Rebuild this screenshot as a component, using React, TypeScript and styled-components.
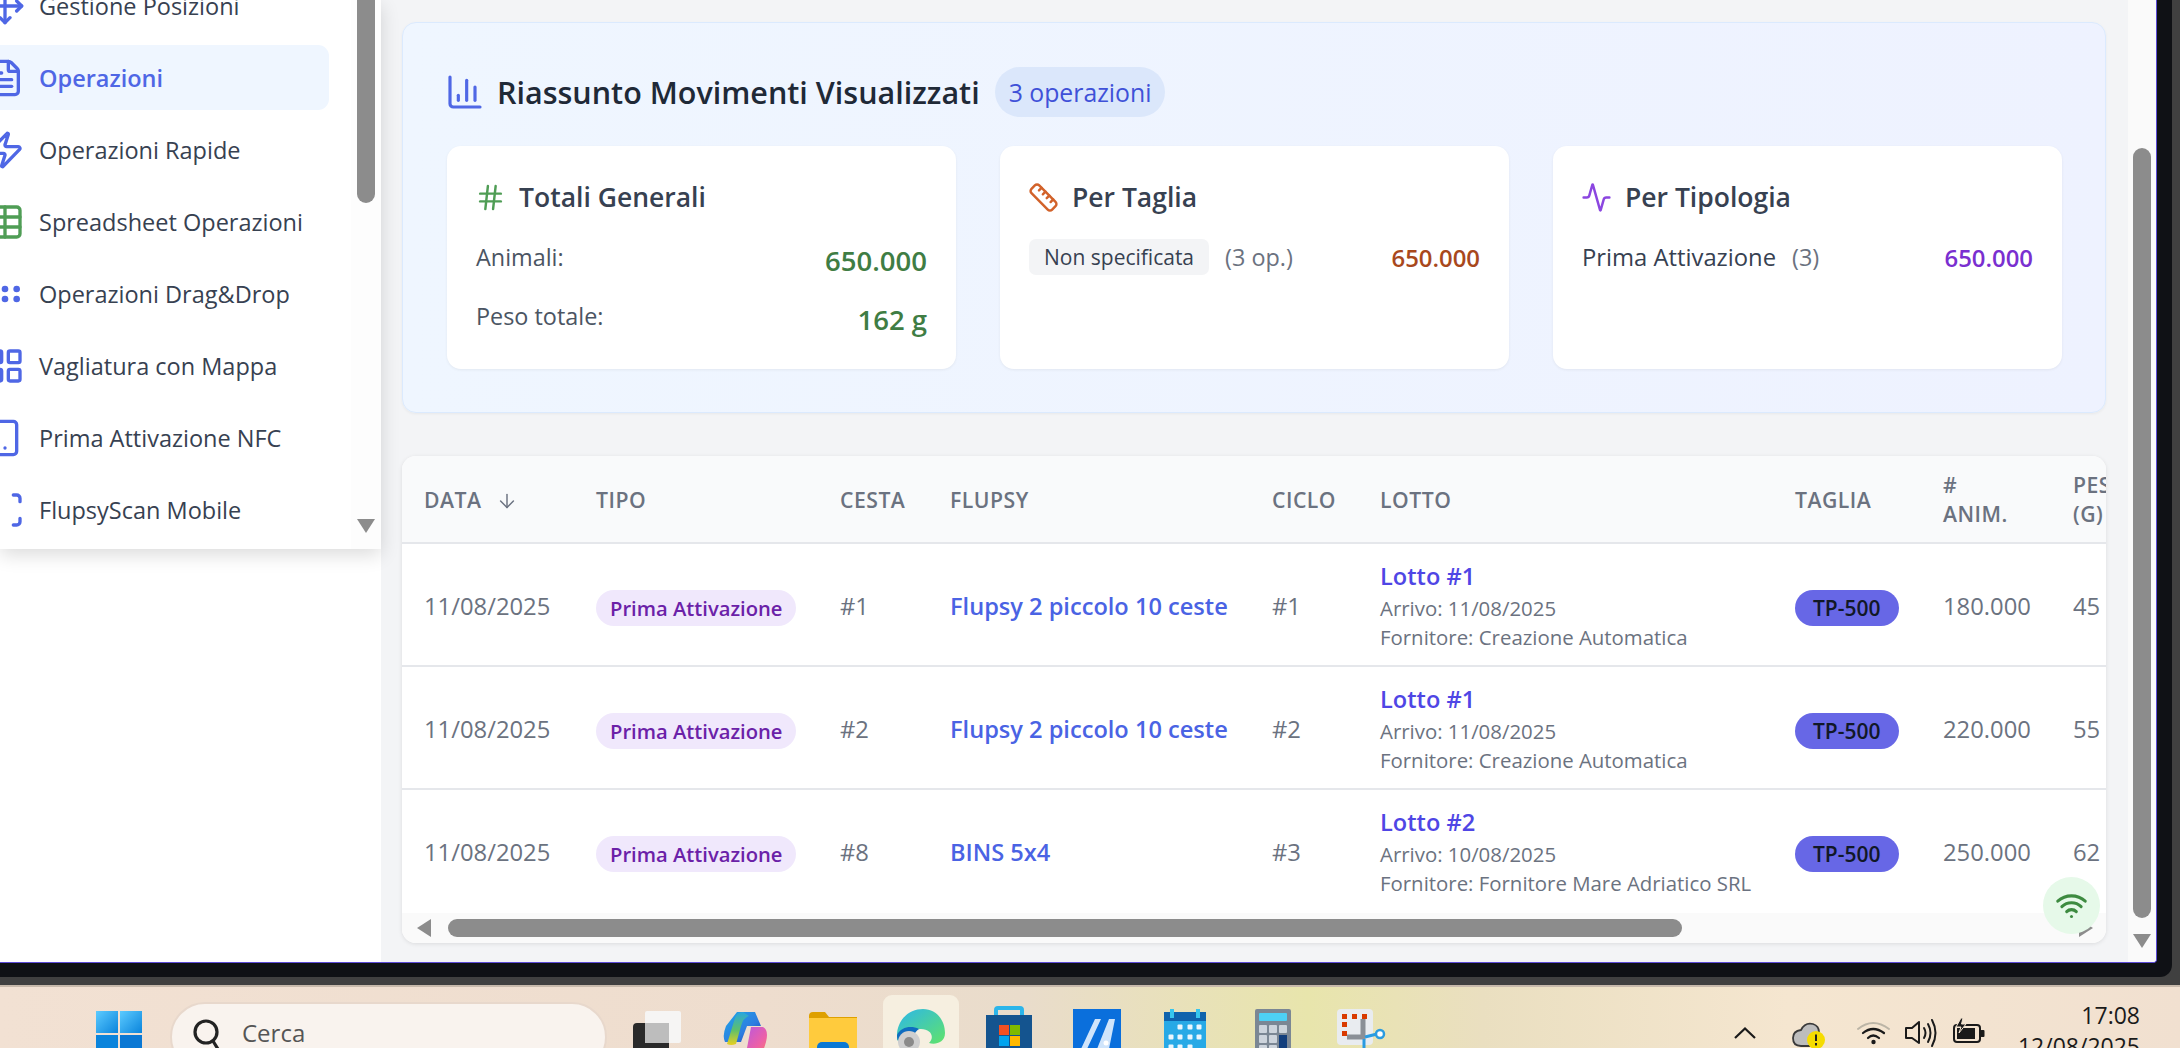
import React from "react";
import styled, { createGlobalStyle } from "styled-components";
import {
  Move, FileText, Zap, Table, GripHorizontal, LayoutGrid, Smartphone, Scan,
  ChartColumn, Hash, Ruler, Activity, ArrowDown, Wifi,
} from "lucide-react";

const FONT = `"Open Sans", "Noto Sans", "Liberation Sans", sans-serif`;

const Global = createGlobalStyle`
  html, body { margin: 0; padding: 0; width: 2180px; height: 1048px; overflow: hidden; background: #404040; }
  * { box-sizing: border-box; }
  body { font-family: ${FONT}; }
`;

const Screen = styled.div`
  width: 2180px; height: 1048px; display: flex; flex-direction: column; overflow: hidden;
`;
const GrayFrame = styled.div`
  height: 985px; flex: none; background: #404040; padding-right: 8px; padding-bottom: 8px; display: flex;
`;
const BlackFrame = styled.div`
  flex: 1; background: #0f1115; padding-right: 15px; padding-bottom: 14px; display: flex;
  border-bottom-right-radius: 12px; min-width: 0;
`;
const Win = styled.div`
  flex: 1; min-width: 0; display: flex; background: #fff; overflow: hidden;
  border-right: 1px solid #5b4bd6; border-bottom: 1px solid #5b4bd6; border-bottom-right-radius: 4px;
`;

/* Sidebar */
const SideColumn = styled.aside`
  width: 381px; flex: none; background: #fff; position: relative; z-index: 2;
`;
const SidePanel = styled.div`
  height: 549px; background: #fff; display: flex; box-shadow: 0 6px 18px rgba(0,0,0,.14);
`;
const NavClip = styled.div`
  flex: 1; min-width: 0; overflow: hidden;
`;
const Nav = styled.nav`
  margin: -27px 22px 0 -30px; display: flex; flex-direction: column; gap: 7px;
`;
const NavItem = styled.div<{ $active?: boolean; $icon?: string }>`
  height: 65px; flex: none; border-radius: 11px; display: flex; align-items: center; gap: 14px; padding-left: 15px;
  background: ${(p) => (p.$active ? "#eff6ff" : "transparent")};
  color: ${(p) => (p.$active ? "#4f67e5" : "#374151")};
  font-weight: ${(p) => (p.$active ? 600 : 400)};
  font-size: 23.5px; white-space: nowrap;
  svg { width: 40px; height: 40px; flex: none; color: ${(p) => p.$icon || "#4f67e5"}; stroke-width: 2; }
`;
const SideTrack = styled.div`
  width: 30px; flex: none; background: #fdfdfd; display: flex; flex-direction: column; align-items: center; padding-bottom: 16px;
`;
const SideThumb = styled.div`
  width: 18px; height: 203px; flex: none; background: #8c8c8c; border-radius: 0 0 9px 9px;
`;
const Spring = styled.div`flex: 1;`;
const ArrowDownTri = styled.div`
  width: 0; height: 0; border-left: 9px solid transparent; border-right: 9px solid transparent;
  border-top: 14px solid #8c8c8c; flex: none;
`;

/* Main */
const Main = styled.main`
  flex: 1; min-width: 0; background: #f3f4f6; padding: 22px 22px 0 21px; display: flex; flex-direction: column; gap: 43px;
`;
const PageTrack = styled.div`
  width: 28px; flex: none; background: #fafafa; display: flex; flex-direction: column; align-items: center; padding-top: 148px; padding-bottom: 14px;
`;
const PageThumb = styled.div`
  width: 18px; height: 770px; flex: none; background: #8c8c8c; border-radius: 9px;
`;

const SummaryPanel = styled.section`
  height: 391px; flex: none; border: 1px solid #dbeafe; border-radius: 14px; padding: 44px 43px 0 44px;
  background: linear-gradient(90deg, #eff6ff, #eef2ff); box-shadow: 0 1px 3px rgba(0,0,0,.05);
`;
const SummaryHead = styled.div`
  height: 50px; display: flex; align-items: center;
  svg { width: 40px; height: 40px; color: #4f67e5; flex: none; margin-left: -2px; stroke-width: 1.9; }
`;
const SummaryTitle = styled.h2`
  margin: 0 15px 0 12px; font-size: 30.5px; font-weight: 600; color: #1f2937; white-space: nowrap;
`;
const CountBadge = styled.span`
  height: 50px; padding: 0 14px; border-radius: 25px; background: #dbe7fb; color: #3f51d8;
  font-size: 24.8px; font-weight: 500; display: flex; align-items: center; white-space: nowrap;
`;
const Cards = styled.div`
  margin-top: 29px; display: grid; grid-template-columns: repeat(3, 1fr); gap: 44px;
`;
const Card = styled.div`
  height: 223px; background: #fff; border-radius: 14px; padding: 29px 29px 0; box-shadow: 0 1px 3px rgba(0,0,0,.06);
`;
const CardHead = styled.div<{ $color: string }>`
  height: 44px; display: flex; align-items: center; gap: 13px; margin-bottom: 20px;
  svg { width: 31px; height: 31px; flex: none; color: ${(p) => p.$color}; margin-left: -1px; stroke-width: 1.9; }
`;
const CardTitle = styled.h3`
  margin: 0; font-size: 26.5px; font-weight: 600; color: #374151; white-space: nowrap;
`;
const StatRow = styled.div`
  display: flex; justify-content: space-between; align-items: flex-start; height: 44px; margin-bottom: 15px;
`;
const StatLabel = styled.span`
  font-size: 23.4px; line-height: 36px; color: #4b5563;
`;
const StatValue = styled.span`
  font-size: 27.5px; line-height: 44px; font-weight: 600; color: #3f7d44;
`;
const BreakRow = styled.div`
  display: flex; align-items: center; height: 36px;
`;
const SizeChip = styled.span`
  height: 36px; padding: 0 15px; background: #f3f4f6; border-radius: 7px; color: #374151;
  font-size: 21px; font-weight: 500; display: flex; align-items: center; white-space: nowrap;
`;
const MutedCount = styled.span`
  margin-left: 16px; font-size: 23.4px; color: #6b7280; white-space: nowrap;
`;
const TypeName = styled.span`
  font-size: 23.8px; color: #374151; white-space: nowrap;
`;
const BreakValue = styled.span<{ $color: string }>`
  margin-left: auto; font-size: 23.9px; font-weight: 600; color: ${(p) => p.$color};
`;

/* Table */
const TableCard = styled.section`
  height: 487px; flex: none; position: relative; background: #fff; border-radius: 14px; overflow: hidden;
  box-shadow: 0 1px 4px rgba(0,0,0,.1); display: flex; flex-direction: column;
`;
const TableClip = styled.div`
  flex: 1; min-height: 0; overflow: hidden;
`;
const DataTable = styled.table`
  border-collapse: collapse; table-layout: fixed; width: 1788px;
`;
const Th = styled.th`
  height: 87px; padding: 0 0 0 22px; background: #f9fafb; border-bottom: 2px solid #e5e7eb; text-align: left;
  color: #6b7280; font-size: 21.2px; font-weight: 600; line-height: 29px; letter-spacing: 0.5px; text-transform: uppercase; white-space: nowrap;
  svg { width: 22px; height: 22px; margin-left: 14px; vertical-align: -4px; stroke-width: 1.6; }
`;
const Tr = styled.tr`
  &:not(:last-child) td { border-bottom: 2px solid #e5e7eb; }
`;
const Td = styled.td`
  height: 123px; padding: 2px 0 0 22px; font-size: 23.8px; color: #6b7280; white-space: nowrap; vertical-align: middle;
`;
const TypePill = styled.span`
  display: inline-flex; align-items: center; height: 36px; padding: 0 14px; border-radius: 18px; background: #f0e8fc; color: #6b21a8;
  font-size: 20.2px; font-weight: 600; vertical-align: middle; margin-top: 4px;
`;
const FlupsyLink = styled.span`
  color: #4a63e4; font-weight: 600; font-size: 23.6px;
`;
const LotName = styled.div`
  color: #4f46e5; font-size: 23.6px; font-weight: 600; line-height: 33px; margin-bottom: 1px;
`;
const LotMeta = styled.div`
  color: #6b7280; font-size: 20.4px; line-height: 29px;
`;
const SizePill = styled.span`
  display: inline-flex; align-items: center; height: 36px; padding: 0 18px; border-radius: 18px; background: #6767e6; color: #111827;
  font-size: 21px; font-weight: 600; vertical-align: middle; margin-top: 4px;
`;
const HBar = styled.div`
  height: 30px; flex: none; background: #fafafa; display: flex; align-items: center; padding: 0 13px 0 15px;
`;
const HLeft = styled.div`
  width: 0; height: 0; border-top: 9px solid transparent; border-bottom: 9px solid transparent; border-right: 14px solid #8c8c8c; flex: none;
`;
const HThumb = styled.div`
  width: 1234px; height: 18px; margin-left: 17px; background: #8c8c8c; border-radius: 9px; flex: none;
`;
const HRight = styled.div`
  width: 0; height: 0; margin-left: auto; border-top: 9px solid transparent; border-bottom: 9px solid transparent; border-left: 14px solid #8c8c8c; flex: none;
`;
const WifiBadge = styled.div`
  position: absolute; right: 6px; bottom: 9px; width: 57px; height: 57px; border-radius: 50%; background: #e6f9e9;
  display: flex; align-items: center; justify-content: center;
  svg { width: 33px; height: 33px; color: #3d8b40; stroke-width: 2.2; }
`;

/* Taskbar */
const Taskbar = styled.footer`
  height: 63px; flex: none; overflow: hidden; display: flex; align-items: flex-start; padding-left: 96px;
  border-top: 2px solid #c7b9ab;
  background: linear-gradient(90deg, #f2e1d3 0%, #eeddce 35%, #e9dccb 47%, #e8e5ac 60%, #eadfc0 68%, #f5e6d0 82%, #f1e0d0 100%);
`;
const Slot = styled.div<{ $x: number; $y: number; $w: number }>`
  flex: none; width: ${(p) => p.$w}px; margin-left: ${(p) => p.$x}px; margin-top: ${(p) => p.$y}px; position: relative;
  svg { display: block; width: 100%; overflow: visible; }
`;
const SearchBox = styled.div`
  flex: none; width: 437px; height: 70px; margin: 15px 0 0 28px; background: #f9f3ee; border: 2px solid #e8d8cc; border-radius: 35px;
  display: flex; align-items: flex-start; padding: 12px 0 0 21px; gap: 19px;
  color: #555; font-size: 24px; font-family: ${FONT};
  svg { margin-top: 2px; }
`;
const ActiveTile = styled.div`
  flex: none; width: 76px; height: 70px; margin: 8px 0 0 26px; background: #f6efe0; border-radius: 9px 9px 0 0; padding: 14px 0 0 14px;
  svg { display: block; width: 48px; }
`;
const Clock = styled.div`
  flex: none; margin-left: 31px; margin-top: 13px; width: 124px; text-align: right; color: #1a1a1a; font-size: 23px; line-height: 31px;
`;

const Row = ({ date, cesta, flupsy, ciclo, lotto, arrivo, fornitore, anim, peso }: Record<string, string>) => (
  <Tr>
    <Td>{date}</Td>
    <Td><TypePill>Prima Attivazione</TypePill></Td>
    <Td>{cesta}</Td>
    <Td><FlupsyLink>{flupsy}</FlupsyLink></Td>
    <Td>{ciclo}</Td>
    <Td>
      <LotName>{lotto}</LotName>
      <LotMeta>Arrivo: {arrivo}</LotMeta>
      <LotMeta>Fornitore: {fornitore}</LotMeta>
    </Td>
    <Td><SizePill>TP-500</SizePill></Td>
    <Td>{anim}</Td>
    <Td>{peso}</Td>
  </Tr>
);

const widths = [172, 244, 110, 322, 108, 415, 148, 130, 140];

export default function App() {
  return (
    <Screen>
      <Global />
      <GrayFrame>
        <BlackFrame>
          <Win>
            <SideColumn>
              <SidePanel>
                <NavClip>
                  <Nav>
                    <NavItem><Move />Gestione Posizioni</NavItem>
                    <NavItem $active><FileText />Operazioni</NavItem>
                    <NavItem><Zap />Operazioni Rapide</NavItem>
                    <NavItem $icon="#4f9d55"><Table />Spreadsheet Operazioni</NavItem>
                    <NavItem><GripHorizontal />Operazioni Drag&amp;Drop</NavItem>
                    <NavItem><LayoutGrid />Vagliatura con Mappa</NavItem>
                    <NavItem><Smartphone />Prima Attivazione NFC</NavItem>
                    <NavItem><Scan />FlupsyScan Mobile</NavItem>
                  </Nav>
                </NavClip>
                <SideTrack>
                  <SideThumb />
                  <Spring />
                  <ArrowDownTri />
                </SideTrack>
              </SidePanel>
            </SideColumn>
            <Main>
              <SummaryPanel>
                <SummaryHead>
                  <ChartColumn />
                  <SummaryTitle>Riassunto Movimenti Visualizzati</SummaryTitle>
                  <CountBadge>3 operazioni</CountBadge>
                </SummaryHead>
                <Cards>
                  <Card>
                    <CardHead $color="#4f9d55"><Hash /><CardTitle>Totali Generali</CardTitle></CardHead>
                    <StatRow><StatLabel>Animali:</StatLabel><StatValue>650.000</StatValue></StatRow>
                    <StatRow><StatLabel>Peso totale:</StatLabel><StatValue>162 g</StatValue></StatRow>
                  </Card>
                  <Card>
                    <CardHead $color="#d2622a"><Ruler /><CardTitle>Per Taglia</CardTitle></CardHead>
                    <BreakRow>
                      <SizeChip>Non specificata</SizeChip>
                      <MutedCount>(3 op.)</MutedCount>
                      <BreakValue $color="#a8481c">650.000</BreakValue>
                    </BreakRow>
                  </Card>
                  <Card>
                    <CardHead $color="#8b46e0"><Activity /><CardTitle>Per Tipologia</CardTitle></CardHead>
                    <BreakRow>
                      <TypeName>Prima Attivazione</TypeName>
                      <MutedCount>(3)</MutedCount>
                      <BreakValue $color="#7a2fd0">650.000</BreakValue>
                    </BreakRow>
                  </Card>
                </Cards>
              </SummaryPanel>
              <TableCard>
                <TableClip>
                  <DataTable>
                    <colgroup>
                      {widths.map((w, i) => <col key={i} width={w} />)}
                    </colgroup>
                    <thead>
                      <tr>
                        <Th>Data<ArrowDown /></Th>
                        <Th>Tipo</Th>
                        <Th>Cesta</Th>
                        <Th>Flupsy</Th>
                        <Th>Ciclo</Th>
                        <Th>Lotto</Th>
                        <Th>Taglia</Th>
                        <Th>#<br />Anim.</Th>
                        <Th>Peso<br />(g)</Th>
                      </tr>
                    </thead>
                    <tbody>
                      <Row date="11/08/2025" cesta="#1" flupsy="Flupsy 2 piccolo 10 ceste" ciclo="#1" lotto="Lotto #1" arrivo="11/08/2025" fornitore="Creazione Automatica" anim="180.000" peso="45" />
                      <Row date="11/08/2025" cesta="#2" flupsy="Flupsy 2 piccolo 10 ceste" ciclo="#2" lotto="Lotto #1" arrivo="11/08/2025" fornitore="Creazione Automatica" anim="220.000" peso="55" />
                      <Row date="11/08/2025" cesta="#8" flupsy="BINS 5x4" ciclo="#3" lotto="Lotto #2" arrivo="10/08/2025" fornitore="Fornitore Mare Adriatico SRL" anim="250.000" peso="62" />
                    </tbody>
                  </DataTable>
                </TableClip>
                <HBar>
                  <HLeft />
                  <HThumb />
                  <HRight />
                </HBar>
                <WifiBadge><Wifi /></WifiBadge>
              </TableCard>
            </Main>
            <PageTrack>
              <PageThumb />
              <Spring />
              <ArrowDownTri />
            </PageTrack>
          </Win>
        </BlackFrame>
      </GrayFrame>
      <Taskbar>
        <Slot $x={0} $y={24} $w={46}>
          <svg viewBox="0 0 46 46">
            <defs>
              <linearGradient id="w1" x1="0" y1="0" x2="1" y2="1"><stop offset="0" stopColor="#5ccbff" /><stop offset="1" stopColor="#0a84dc" /></linearGradient>
            </defs>
            <rect x="0" y="0" width="22" height="22" fill="url(#w1)" />
            <rect x="24" y="0" width="22" height="22" fill="url(#w1)" />
            <rect x="0" y="24" width="22" height="22" fill="#0a84dc" />
            <rect x="24" y="24" width="22" height="22" fill="#0a78d4" />
          </svg>
        </Slot>
        <SearchBox>
          <svg width="30" height="38" viewBox="0 0 30 38" fill="none" stroke="#222" strokeWidth="3.2">
            <circle cx="13" cy="14" r="11" />
            <path d="M20 23 L28 36" />
          </svg>
          Cerca
        </SearchBox>
        <Slot $x={26} $y={24} $w={48}>
          <svg viewBox="0 0 48 50">
            <rect x="0" y="12" width="36" height="40" rx="4" fill="#2a2a2a" />
            <rect x="12" y="0" width="36" height="32" rx="2" fill="#f5f5f5" opacity="0.95" />
            <rect x="12" y="12" width="24" height="20" fill="#bdbdbd" />
          </svg>
        </Slot>
        <Slot $x={42} $y={25} $w={44}>
          <svg viewBox="0 0 44 50">
            <defs>
              <linearGradient id="cp1" x1="0" y1="0" x2="1" y2="1"><stop offset="0" stopColor="#1fa8e8" /><stop offset="0.6" stopColor="#2e7de0" /><stop offset="1" stopColor="#1238b0" /></linearGradient>
              <linearGradient id="cp2" x1="0" y1="0" x2="0" y2="1"><stop offset="0" stopColor="#28a6e0" /><stop offset="0.55" stopColor="#5fc06a" /><stop offset="1" stopColor="#e8d020" /></linearGradient>
              <linearGradient id="cp3" x1="0" y1="0" x2="1" y2="1"><stop offset="0" stopColor="#a855f0" /><stop offset="0.6" stopColor="#ec60a8" /><stop offset="1" stopColor="#ff8a50" /></linearGradient>
            </defs>
            <path d="M14 0 H32 L38 14 H24 L18 30 H2 Q-1 24 3 14 Z" fill="url(#cp1)" />
            <path d="M4 32 L12 6 Q14 0 20 0 L26 4 Q20 6 18 14 L13 32 Q8 34 4 32 Z" fill="url(#cp2)" />
            <path d="M28 15 H40 Q46 18 43 30 L38 46 Q34 52 22 52 H12 L24 36 Z" fill="url(#cp3)" />
          </svg>
        </Slot>
        <Slot $x={42} $y={25} $w={48}>
          <svg viewBox="0 0 48 50">
            <path d="M0 4 Q0 0 4 0 H16 L20 5 H48 V12 H0 Z" fill="#dea000" />
            <rect x="0" y="6" width="48" height="44" fill="#ffcb3d" />
            <rect x="8" y="30" width="32" height="24" rx="5" fill="#0a78d4" />
            <rect x="13" y="36" width="22" height="10" fill="#0a5ba8" />
          </svg>
        </Slot>
        <ActiveTile>
          <svg viewBox="0 0 48 50">
            <defs>
              <linearGradient id="ed1" x1="0" y1="0" x2="1" y2="1"><stop offset="0" stopColor="#2cb6ea" /><stop offset="1" stopColor="#60e36a" /></linearGradient>
            </defs>
            <path d="M0 24 C2 8 14 0 26 0 C40 0 48 12 48 24 C48 34 38 36 32 34 C38 28 34 20 24 20 C12 20 4 24 0 32 Z" fill="url(#ed1)" />
            <path d="M0 26 C4 18 14 16 22 20 C16 24 14 32 18 40 C8 42 0 36 0 26 Z" fill="#0f6cc0" />
            <path d="M18 40 C24 48 40 46 44 40 L44 50 H18 Z" fill="#0f6cc0" />
            <circle cx="12" cy="33" r="11" fill="#cfcfcf" />
            <circle cx="12" cy="33" r="5" fill="#8a8a8a" />
          </svg>
        </ActiveTile>
        <Slot $x={27} $y={21} $w={46}>
          <svg viewBox="0 0 46 52">
            <path d="M10 9 V2 Q10 0 12 0 H34 Q36 0 36 2 V9" fill="none" stroke="#2cb5ea" strokeWidth="4" />
            <rect x="0" y="7" width="46" height="45" fill="#14548f" />
            <rect x="13" y="17" width="10" height="10" fill="#f25022" />
            <rect x="24" y="17" width="10" height="10" fill="#7fba00" />
            <rect x="13" y="28" width="10" height="10" fill="#00a4ef" />
            <rect x="24" y="28" width="10" height="10" fill="#ffb900" />
          </svg>
        </Slot>
        <Slot $x={41} $y={22} $w={48}>
          <svg viewBox="0 0 48 50">
            <rect width="48" height="50" fill="#0a6fdc" />
            <path d="M8 40 L22 10 H28 L14 40 Z M24 40 L36 10 H42 L36 40 Z" fill="#cfe4fb" />
            <circle cx="33" cy="34" r="2.5" fill="#fff" />
          </svg>
        </Slot>
        <Slot $x={43} $y={22} $w={42}>
          <svg viewBox="0 0 42 50">
            <rect y="3" width="42" height="47" fill="#27a9e6" />
            <rect y="3" width="42" height="9" fill="#0f63ad" />
            <rect x="6" y="0" width="4" height="9" fill="#36c6ee" />
            <rect x="32" y="0" width="4" height="9" fill="#36c6ee" />
            {[[16, 18], [26, 18], [35, 18], [7, 28], [16, 28], [26, 28], [35, 28], [7, 38], [16, 38], [26, 38]].map(([x, y], i) => (
              <rect key={i} x={x - 2.5} y={y - 2.5} width="5" height="5" rx="1" fill="#eaf6fd" />
            ))}
          </svg>
        </Slot>
        <Slot $x={49} $y={22} $w={36}>
          <svg viewBox="0 0 36 50">
            <rect width="36" height="50" rx="2" fill="#7b8794" />
            <rect x="4" y="4" width="28" height="8" rx="1" fill="#4dd0f5" />
            {[[4, 16], [14, 16], [24, 16], [4, 26], [14, 26], [4, 36], [14, 36]].map(([x, y], i) => (
              <rect key={i} x={x} y={y} width="8" height="8" rx="1" fill="#cdd4dc" />
            ))}
            <rect x="24" y="26" width="8" height="24" fill="#123e7c" />
          </svg>
        </Slot>
        <Slot $x={46} $y={22} $w={48}>
          <svg viewBox="0 0 48 40">
            <rect width="36" height="36" rx="4" fill="#e9ecf0" />
            {[[5, 5], [15, 5], [5, 13], [5, 22]].map(([x, y], i) => (
              <rect key={i} x={x} y={y} width="5" height="5" fill="#d93a00" />
            ))}
            <rect x="25" y="5" width="5" height="5" fill="#d93a00" />
            <path d="M26 10 V28 H10" fill="none" stroke="#8a8f96" strokeWidth="5" />
            <path d="M28 28 L40 25" stroke="#2a9be0" strokeWidth="3" />
            <circle cx="43" cy="25" r="4" fill="#fff" stroke="#2a9be0" strokeWidth="2.5" />
            <path d="M27 30 V40" stroke="#2a9be0" strokeWidth="3" />
          </svg>
        </Slot>
        <Slot $x={349} $y={40} $w={22}>
          <svg viewBox="0 0 22 12"><path d="M1 11 L11 1.5 L21 11" fill="none" stroke="#1a1a1a" strokeWidth="2.2" /></svg>
        </Slot>
        <Slot $x={37} $y={35} $w={34}>
          <svg viewBox="0 0 34 30">
            <path d="M8 24 Q0 24 0 16 Q0 9 8 8 Q12 0 20 2 Q26 4 26 10 V24 Z" fill="#bdbdbd" stroke="#3a3a3a" strokeWidth="1.8" />
            <circle cx="23" cy="18" r="9" fill="#f5dc00" />
            <path d="M23 12.5 V19 M23 21 V23.5" stroke="#222" strokeWidth="2" />
          </svg>
        </Slot>
        <Slot $x={30} $y={34} $w={33}>
          <svg viewBox="0 0 33 24" fill="none" strokeLinecap="round">
            <path d="M1 8 Q16 -4 32 8" stroke="#bcb5a6" strokeWidth="2" />
            <path d="M6 12 Q16 4 27 12" stroke="#1a1a1a" strokeWidth="2.2" />
            <path d="M11 17 Q16 12 22 17" stroke="#1a1a1a" strokeWidth="2.2" />
            <circle cx="16.5" cy="21" r="2.2" fill="#1a1a1a" />
          </svg>
        </Slot>
        <Slot $x={15} $y={32} $w={33}>
          <svg viewBox="0 0 33 28" fill="none" stroke="#1a1a1a" strokeWidth="2" strokeLinejoin="round" strokeLinecap="round">
            <path d="M1 9 H7 L14 3 V24 L7 19 H1 Z" />
            <path d="M19 9 Q22 14 19 19" />
            <path d="M23 5 Q28 14 23 23" />
            <path d="M27 1 Q34 14 27 27" />
          </svg>
        </Slot>
        <Slot $x={15} $y={31} $w={32}>
          <svg viewBox="0 0 32 26">
            <rect x="1" y="7" width="26" height="17" rx="3" fill="none" stroke="#1a1a1a" strokeWidth="2" />
            <rect x="4" y="10" width="18" height="11" fill="#1a1a1a" />
            <rect x="27.5" y="12" width="4" height="7" rx="1" fill="#1a1a1a" />
            <path d="M8 0 L3 9 H8 L6 15 L13 6 H8.5 L10 0 Z" fill="#1a1a1a" stroke="#f1e2cf" strokeWidth="1" />
          </svg>
        </Slot>
        <Clock>17:08<br />12/08/2025</Clock>
      </Taskbar>
    </Screen>
  );
}
